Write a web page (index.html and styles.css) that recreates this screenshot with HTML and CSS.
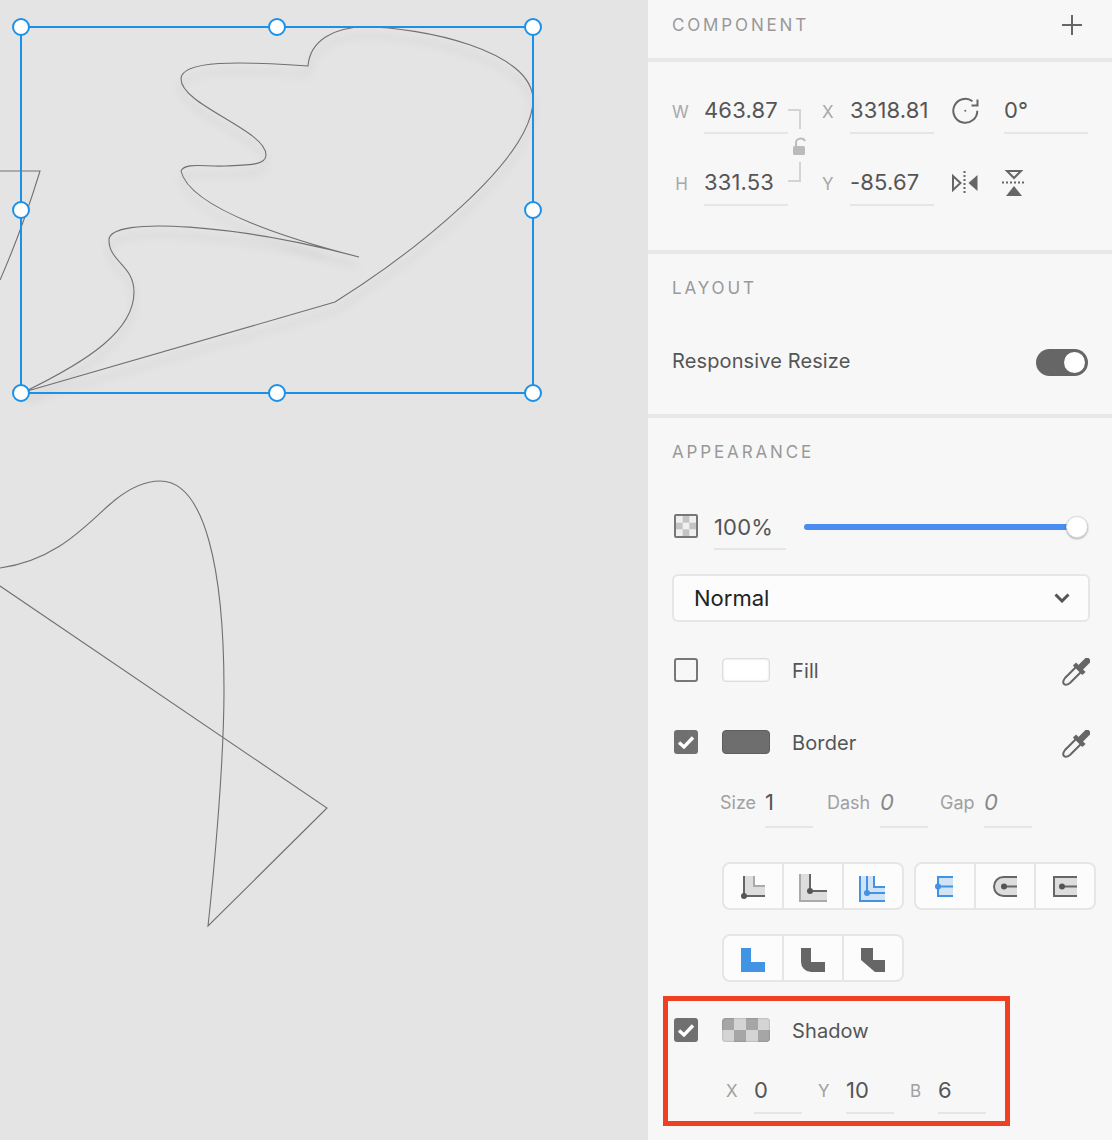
FILE: index.html
```html
<!DOCTYPE html>
<html lang="en">
<head>
    <meta charset="UTF-8">
    <meta name="viewport" content="width=device-width, initial-scale=1.0">
    <title>Component</title>
    <link rel="stylesheet" href="styles.css">
</head>
<body>
    <div class="wrap">
        <section class="canvas">
            <svg class="drawing" width="648" height="1140" viewBox="0 0 648 1140">
                <path class="line" d="M0 171 H40 Q22 230 0 280"/>
                <path class="line line-shadow" d="M359 257 C300 242 190 210 181 171 C185 162 205 167 225 166 C250 165 266 165 266 155 C266 130 181 105 181 79 C181 60 240 61 308 66 C310 40 335 27 365 27 C420 27 533 50 533 100 C533 160 410 255 335 302 L24 392 C90 360 134 330 134 292 C134 265 109 262 109 240 C109 215 240 225 359 257"/>
                <path class="line" d="M0 568 C60 560 90 520 115 500 C135 484 150 481 160 481 C205 481 224 570 224 690 C224 770 212 890 208 926 L327 808 L0 586"/>
                <rect class="sel-box" x="21" y="27" width="512" height="366"/>
                <circle class="handle" cx="21" cy="27" r="8"/>
                <circle class="handle" cx="277" cy="27" r="8"/>
                <circle class="handle" cx="533" cy="27" r="8"/>
                <circle class="handle" cx="21" cy="210" r="8"/>
                <circle class="handle" cx="533" cy="210" r="8"/>
                <circle class="handle" cx="21" cy="393" r="8"/>
                <circle class="handle" cx="277" cy="393" r="8"/>
                <circle class="handle" cx="533" cy="393" r="8"/>
            </svg>
        </section>

        <aside class="panel">
            <div class="panel-head">
                <h2 class="title">COMPONENT</h2>
                <svg class="plus" width="20" height="20" viewBox="0 0 20 20"><path d="M10 0 V20 M0 10 H20"/></svg>
            </div>

            <div class="dimensions">
                <span class="dim-label right">W</span>
                <div class="field">463.87</div>
                <span></span>
                <span class="dim-label">X</span>
                <div class="field">3318.81</div>
                <div class="icon-cell rotate-cell">
                    <svg width="30" height="30" viewBox="0 0 30 30" fill="none" stroke="#666" stroke-width="2">
                        <path d="M27.3 14.7 A12 12 0 1 1 22.5 5.2"/>
                        <path d="M27.5 3.5 V9.5 H21.5"/>
                        <circle cx="15.3" cy="14.7" r="1" fill="#666" stroke="none"/>
                    </svg>
                </div>
                <div class="field">0°</div>

                <span class="dim-label right">H</span>
                <div class="field">331.53</div>
                <span></span>
                <span class="dim-label">Y</span>
                <div class="field">-85.67</div>
                <div class="icon-cell flip-h-cell">
                    <svg width="28" height="24" viewBox="0 0 28 24">
                        <path d="M2 5 L9.5 12 L2 19 Z" fill="none" stroke="#666" stroke-width="2"/>
                        <path d="M13.5 0 V24" stroke="#666" stroke-width="2" stroke-dasharray="2 2"/>
                        <path d="M26.5 4 V20 L17.5 12 Z" fill="#666"/>
                    </svg>
                </div>
                <div class="icon-cell flip-v-cell">
                    <svg width="24" height="28" viewBox="0 0 24 28">
                        <path d="M5 2 H19 L12 9 Z" fill="none" stroke="#666" stroke-width="2"/>
                        <path d="M0 13.5 H24" stroke="#666" stroke-width="2" stroke-dasharray="2 2"/>
                        <path d="M4 27 H20 L12 17 Z" fill="#666"/>
                    </svg>
                </div>

                <svg class="link" width="18" height="74" viewBox="0 0 18 74" fill="none">
                    <path d="M0 1 H12 V20 M12 53 V72 H0" stroke="#d4d4d4" stroke-width="2"/>
                    <path d="M8 38 V34 C8 29 15 28 17 32" stroke="#bbb" stroke-width="2"/>
                    <rect x="5" y="37" width="12" height="9" rx="1.5" fill="#bbb"/>
                </svg>
            </div>

            <div class="layout-section">
                <h2 class="title">LAYOUT</h2>
                <div class="toggle-row">
                    <span class="row-label">Responsive Resize</span>
                    <div class="toggle"><div class="knob"></div></div>
                </div>
            </div>

            <div class="appearance">
                <h2 class="title">APPEARANCE</h2>

                <div class="opacity-row">
                    <div class="opacity-icon"></div>
                    <div class="field opacity-field">100%</div>
                    <div class="slider"><div class="thumb"></div></div>
                </div>

                <div class="select">
                    <span>Normal</span>
                    <svg width="16" height="10" viewBox="0 0 16 10"><path d="M1.5 1.5 L8 8 L14.5 1.5" fill="none" stroke="#555" stroke-width="3"/></svg>
                </div>

                <div class="style-row fill-row">
                    <div class="check"></div>
                    <div class="swatch white"></div>
                    <span class="row-label">Fill</span>
                    <svg class="dropper" width="28" height="28" viewBox="0 0 28 28">
                        <path d="M14 9 L3 20 Q0 24 2 26 Q4 28 8 25 L19 14" fill="none" stroke="#666" stroke-width="2"/>
                        <path d="M12.5 6 L22 15.5" stroke="#666" stroke-width="4.5"/>
                        <path d="M18.5 9.5 L25 3" stroke="#666" stroke-width="6.5" stroke-linecap="round"/>
                    </svg>
                </div>

                <div class="style-row border-row">
                    <div class="check on">
                        <svg width="24" height="24" viewBox="0 0 24 24"><path d="M5 12.5 L10 17 L19 7.5" fill="none" stroke="#fff" stroke-width="3.4"/></svg>
                    </div>
                    <div class="swatch dark"></div>
                    <span class="row-label">Border</span>
                    <svg class="dropper" width="28" height="28" viewBox="0 0 28 28">
                        <path d="M14 9 L3 20 Q0 24 2 26 Q4 28 8 25 L19 14" fill="none" stroke="#666" stroke-width="2"/>
                        <path d="M12.5 6 L22 15.5" stroke="#666" stroke-width="4.5"/>
                        <path d="M18.5 9.5 L25 3" stroke="#666" stroke-width="6.5" stroke-linecap="round"/>
                    </svg>
                </div>

                <div class="mini-row stroke-row">
                    <span class="mini-label">Size</span>
                    <div class="mini-field">1</div>
                    <span></span>
                    <span class="mini-label">Dash</span>
                    <div class="mini-field empty">0</div>
                    <span></span>
                    <span class="mini-label">Gap</span>
                    <div class="mini-field empty">0</div>
                </div>

                <div class="seg-row first">
                    <div class="seg-group">
                        <div class="seg">
                            <svg width="36" height="36" viewBox="0 0 36 36">
                                <path d="M10 8 H20 V18 H31 V29 H10 Z" fill="#ddd"/>
                                <path d="M20 8 V18 H31" fill="none" stroke="#aaa" stroke-width="2"/>
                                <path d="M10 8 V28 H31" fill="none" stroke="#666" stroke-width="2"/>
                                <circle cx="10" cy="28" r="3" fill="#555"/>
                            </svg>
                        </div>
                        <div class="seg">
                            <svg width="36" height="36" viewBox="0 0 36 36">
                                <path d="M5 6 H16 V23 H33 V34 H5 Z" fill="#ddd"/>
                                <path d="M6 6 V33 H33" fill="none" stroke="#aaa" stroke-width="2"/>
                                <path d="M16 6 V23 H33" fill="none" stroke="#666" stroke-width="2"/>
                                <circle cx="16" cy="23" r="3" fill="#555"/>
                            </svg>
                        </div>
                        <div class="seg">
                            <svg width="36" height="36" viewBox="0 0 36 36">
                                <path d="M6 8 H20 V19 H31 V33 H6 Z" fill="#d3e3f6"/>
                                <path d="M6 8 V33 H31 M20 8 V19 H31 M13 8 V25 H31" fill="none" stroke="#4193e4" stroke-width="2"/>
                                <circle cx="13" cy="25" r="3" fill="#4193e4"/>
                            </svg>
                        </div>
                    </div>
                    <div class="seg-group">
                        <div class="seg">
                            <svg width="36" height="36" viewBox="0 0 36 36">
                                <path d="M12 9 H27 V29 H12 Z" fill="#d3e3f6"/>
                                <path d="M27 9 H12 V28 H27 M12 18.5 H27" fill="none" stroke="#4193e4" stroke-width="2"/>
                                <circle cx="12" cy="18.5" r="3" fill="#4193e4"/>
                            </svg>
                        </div>
                        <div class="seg">
                            <svg width="36" height="36" viewBox="0 0 36 36">
                                <path d="M31 9 H17.5 A9.5 9.5 0 0 0 17.5 28 H31" fill="#ddd" stroke="#666" stroke-width="2"/>
                                <path d="M18 18.5 H31" stroke="#666" stroke-width="2"/>
                                <circle cx="18" cy="18.5" r="3" fill="#555"/>
                            </svg>
                        </div>
                        <div class="seg">
                            <svg width="36" height="36" viewBox="0 0 36 36">
                                <path d="M31 9 H8 V28 H31" fill="#ddd" stroke="#666" stroke-width="2"/>
                                <path d="M16 18.5 H31" stroke="#666" stroke-width="2"/>
                                <circle cx="16" cy="18.5" r="3" fill="#555"/>
                            </svg>
                        </div>
                    </div>
                </div>

                <div class="seg-row second">
                    <div class="seg-group">
                        <div class="seg">
                            <svg width="36" height="36" viewBox="0 0 36 36"><path d="M7 8 H17 V22 H31 V32 H7 Z" fill="#4193e4"/></svg>
                        </div>
                        <div class="seg">
                            <svg width="36" height="36" viewBox="0 0 36 36"><path d="M7 8 H17 V22 H31 V32 H17 A10 10 0 0 1 7 22 Z" fill="#666"/></svg>
                        </div>
                        <div class="seg">
                            <svg width="36" height="36" viewBox="0 0 36 36"><path d="M7 8 H19 V20 H31 V32 H21 L7 20 Z" fill="#666"/></svg>
                        </div>
                    </div>
                </div>

                <div class="style-row shadow-row">
                    <div class="check on">
                        <svg width="24" height="24" viewBox="0 0 24 24"><path d="M5 12.5 L10 17 L19 7.5" fill="none" stroke="#fff" stroke-width="3.4"/></svg>
                    </div>
                    <div class="swatch checker"></div>
                    <span class="row-label">Shadow</span>
                </div>

                <div class="mini-row shadow-values">
                    <span class="mini-label">X</span>
                    <div class="mini-field">0</div>
                    <span></span>
                    <span class="mini-label">Y</span>
                    <div class="mini-field">10</div>
                    <span></span>
                    <span class="mini-label">B</span>
                    <div class="mini-field">6</div>
                </div>
            </div>

            <div class="callout"></div>
        </aside>
    </div>
</body>
</html>
```

FILE: styles.css
```css
* {
    margin: 0;
    padding: 0;
    box-sizing: border-box;
}

html, body {
    width: 100%;
    height: 100%;
    overflow: hidden;
    background-color: #e4e4e4;
    font-family: Inter, 'Liberation Sans', sans-serif;
}

.wrap {
    display: flex;
    width: 1112px;
    height: 1140px;
}

/* canvas */
.canvas {
    position: relative;
    width: 648px;
    height: 100%;
    background-color: #e4e4e4;
    overflow: hidden;
}

.drawing {
    display: block;
}

.line {
    fill: none;
    stroke: #707070;
    stroke-width: 1.1;
}

.line-shadow {
    filter: drop-shadow(0 9px 4px rgba(0, 0, 0, 0.16));
}

.sel-box {
    fill: none;
    stroke: #1a90e8;
    stroke-width: 2;
}

.handle {
    fill: #fff;
    stroke: #1a90e8;
    stroke-width: 2;
}

/* panel */
.panel {
    position: relative;
    width: 464px;
    height: 100%;
    background-color: #f7f7f7;
    color: #555;
}

.title {
    font-size: 17px;
    line-height: 20px;
    font-weight: 400;
    letter-spacing: 2.85px;
    color: #999;
}

.panel-head {
    display: flex;
    justify-content: space-between;
    align-items: center;
    height: 62px;
    padding: 0 30px 8px 24px;
    border-bottom: 4px solid #e8e8e8;
}

.plus path {
    stroke: #666;
    stroke-width: 2;
}

.dimensions {
    position: relative;
    display: grid;
    grid-template-columns: 32px 84px 34px 28px 84px 70px 84px;
    grid-auto-rows: 44px;
    row-gap: 28px;
    height: 192px;
    padding: 28px 0 0 24px;
    border-bottom: 4px solid #e8e8e8;
}

.dim-label {
    font-size: 17px;
    line-height: 44px;
    color: #a8a8a8;
}

.dim-label.right {
    padding-right: 16px;
    text-align: right;
}

.field {
    height: 44px;
    font-size: 22px;
    line-height: 40px;
    letter-spacing: 0.15px;
    border-bottom: 2px solid #e6e6e6;
}

.icon-cell {
    display: flex;
    align-items: center;
    height: 44px;
}

.rotate-cell {
    padding: 0 0 3px 16px;
}

.flip-h-cell {
    padding: 0 0 3px 17px;
}

.flip-v-cell {
    padding: 0 0 2px 0;
}

.flip-v-cell svg {
    margin-left: -2px;
}

.link {
    position: absolute;
    left: 140px;
    top: 47px;
}

.layout-section {
    height: 164px;
    padding: 24px 24px 0;
    border-bottom: 4px solid #e8e8e8;
}

.toggle-row {
    display: flex;
    justify-content: space-between;
    align-items: center;
    margin-top: 51px;
    height: 27px;
}

.row-label {
    font-size: 20px;
    line-height: 24px;
    letter-spacing: 0.12px;
    color: #555;
}

.toggle-row .row-label {
    margin-top: -3px;
}

.style-row .row-label {
    margin-top: 2px;
}

.toggle {
    position: relative;
    width: 52px;
    height: 27px;
    border-radius: 14px;
    background-color: #666;
}

.knob {
    position: absolute;
    top: 3px;
    right: 3px;
    width: 21px;
    height: 21px;
    border-radius: 50%;
    background-color: #fff;
}

.appearance {
    padding: 24px 22px 0 24px;
}

.opacity-row {
    display: flex;
    margin-top: 42px;
    height: 46px;
}

.opacity-icon {
    width: 24px;
    height: 24px;
    margin: 10px 16px 0 2px;
    border: 2px solid #777;
    border-radius: 2px;
    background: repeating-conic-gradient(#c4c4c4 0 25%, #f0f0f0 0 50%) 0 0 / 13.33px 13.33px;
}

.opacity-field {
    width: 72px;
    height: 46px;
    line-height: 46px;
}

.slider {
    position: relative;
    width: 284px;
    height: 6px;
    margin: 20px 2px 0 18px;
    border-radius: 3px;
    background-color: #4a8cf0;
}

.thumb {
    position: absolute;
    right: 0;
    top: -8px;
    width: 22px;
    height: 22px;
    border-radius: 50%;
    background-color: #fff;
    border: 1px solid #ddd;
    box-shadow: 0 1px 2px rgba(0, 0, 0, 0.3);
}

.select {
    display: flex;
    justify-content: space-between;
    align-items: center;
    height: 48px;
    margin-top: 24px;
    padding: 0 18px 0 20px;
    border: 2px solid #e6e6e6;
    border-radius: 6px;
    background-color: #fcfcfc;
    font-size: 22px;
    color: #222;
}

.style-row {
    display: flex;
    align-items: center;
    height: 24px;
    padding-left: 2px;
}

.fill-row {
    margin-top: 36px;
}

.border-row {
    margin-top: 48px;
}

.check {
    width: 24px;
    height: 24px;
    margin-right: 24px;
    border: 2px solid #777;
    border-radius: 3px;
}

.check.on {
    border: 0;
    background-color: #707070;
}

.check svg {
    display: block;
}

.swatch {
    width: 48px;
    height: 24px;
    margin-right: 22px;
    border-radius: 4px;
}

.swatch.white {
    background-color: #fff;
    border: 1px solid #ddd;
    box-shadow: inset 0 0 2px rgba(0, 0, 0, 0.2);
}

.swatch.dark {
    background-color: #6e6e6e;
    border: 1px solid #5e5e5e;
}

.swatch.checker {
    background: repeating-conic-gradient(#d4d4d4 0 25%, #a6a6a6 0 50%) 0 0 / 24px 24px;
    box-shadow: inset 0 0 2px rgba(0, 0, 0, 0.3);
}

.dropper {
    margin-left: auto;
    margin-top: 4px;
}

.mini-row {
    display: grid;
    height: 44px;
}

.stroke-row {
    grid-template-columns: 45px 48px 14px 53px 48px 12px 44px 48px;
    margin-top: 30px;
    padding-left: 48px;
}

.shadow-values {
    grid-template-columns: 28px 48px 16px 28px 48px 16px 28px 48px;
    margin-top: 28px;
    padding-left: 54px;
}

.mini-label {
    font-size: 17px;
    line-height: 42px;
    color: #a0a0a0;
}

.stroke-row .mini-label {
    font-size: 18px;
    line-height: 38px;
}

.mini-field {
    font-size: 22px;
    line-height: 40px;
    border-bottom: 2px solid #e6e6e6;
}

.stroke-row .mini-field {
    line-height: 36px;
}

.mini-field.empty {
    font-style: italic;
    color: #888;
}

.seg-row {
    display: flex;
    gap: 10px;
    margin-left: 50px;
}

.seg-row.first {
    margin-top: 34px;
}

.seg-row.second {
    margin-top: 24px;
    margin-bottom: 36px;
}

.seg-group {
    display: flex;
    flex-shrink: 0;
    width: 182px;
    height: 48px;
    border: 2px solid #e6e6e6;
    border-radius: 8px;
    background-color: #fcfcfc;
}

.seg {
    display: flex;
    flex: 1;
    justify-content: center;
    align-items: center;
}

.seg + .seg {
    border-left: 2px solid #e6e6e6;
}

.seg svg {
    display: block;
    margin-right: 2px;
}

.callout {
    position: absolute;
    left: 15px;
    top: 996px;
    width: 347px;
    height: 130px;
    border: 5px solid #ef4023;
}
```
